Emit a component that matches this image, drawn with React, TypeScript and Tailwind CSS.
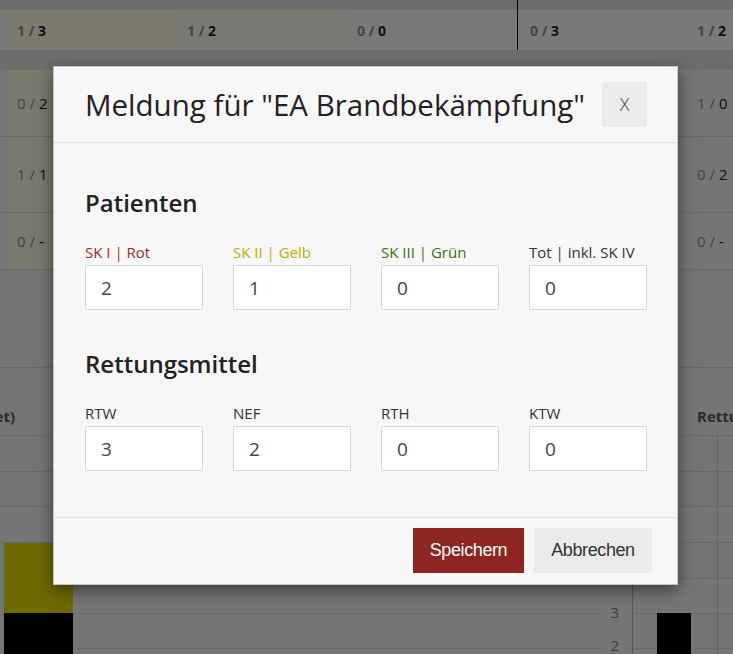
import React from "react";

function Frac({ a, b }: { a: string; b: string }) {
  return (
    <span>
      <span className="text-[#8a8a8a]">{a} / </span>
      <span className="text-[#1c1c2c]">{b}</span>
    </span>
  );
}

function Background() {
  const rows = [
    { h: "h-[67px]", l: ["0", "2"], r: ["1", "0"] },
    { h: "h-[76px]", l: ["1", "1"], r: ["0", "2"] },
    { h: "h-[57px]", l: ["0", "-"], r: ["0", "-"] },
  ];
  return (
    <div className="flex flex-col">
      <div className="h-[10px] shrink-0 bg-[#dadada] pl-[517px]">
        <div className="h-full border-l border-black" />
      </div>
      <div className="flex h-[41px] shrink-0 border-b border-[#d6d6d6] bg-[#f2f2f2] text-[14px] font-bold">
        <div className="w-[7px] shrink-0" />
        <div className="flex w-[170px] shrink-0 items-center bg-[#f6f5d8] pl-[10px]">
          <Frac a="1" b="3" />
        </div>
        <div className="flex w-[170px] shrink-0 items-center bg-[#eef3e6] pl-[10px]">
          <Frac a="1" b="2" />
        </div>
        <div className="flex w-[170px] shrink-0 items-center pl-[10px]">
          <Frac a="0" b="0" />
        </div>
        <div className="flex w-[170px] shrink-0 items-center border-l border-black pl-[12px]">
          <Frac a="0" b="3" />
        </div>
        <div className="flex w-[170px] shrink-0 items-center pl-[10px]">
          <Frac a="1" b="2" />
        </div>
      </div>
      <div className="h-[19px] shrink-0 bg-[#dadada]" />
      {rows.map((r, i) => (
        <div key={i} className={`flex ${r.h} shrink-0 border-b border-[#d2d2d2] text-[15px]`}>
          <div className="w-[7px] shrink-0" />
          <div className="flex w-[170px] shrink-0 items-center bg-[#f2f2dc] pl-[10px]">
            <Frac a={r.l[0]} b={r.l[1]} />
          </div>
          <div className="flex-1" />
          <div className="flex w-[46px] shrink-0 items-center pl-[10px]">
            <Frac a={r.r[0]} b={r.r[1]} />
          </div>
        </div>
      ))}
      <div className="h-[98px] shrink-0 border-b border-[#d2d2d2]" />
      <div className="flex h-[68px] shrink-0 items-start border-b border-[#d2d2d2] pt-[38px] text-[15px] font-bold leading-[20px] text-[#555]">
        <div className="flex w-[15px] shrink-0 justify-end overflow-hidden whitespace-nowrap">(gemeldet)</div>
        <div className="flex-1" />
        <div className="w-[36px] shrink-0 overflow-hidden whitespace-nowrap">Rettungsmittel</div>
      </div>
      {["h-[36px]", "h-[35px]", "h-[36px]"].map((h, i) => (
        <div key={i} className={`flex ${h} shrink-0 border-b border-[#d2d2d2]`}>
          <div className="flex-1" />
          <div className="w-[16px] border-l border-[#c8c8c8]" />
        </div>
      ))}
      <svg width="733" height="111" viewBox="0 0 733 111" className="block shrink-0">
        <line x1="73" y1="35.5" x2="600" y2="35.5" stroke="#d2d2d2" />
        <line x1="73" y1="70.5" x2="600" y2="70.5" stroke="#d2d2d2" />
        <line x1="73" y1="105.5" x2="600" y2="105.5" stroke="#d2d2d2" />
        <line x1="632" y1="35.5" x2="733" y2="35.5" stroke="#d2d2d2" />
        <line x1="632" y1="70.5" x2="733" y2="70.5" stroke="#d2d2d2" />
        <line x1="632" y1="105.5" x2="733" y2="105.5" stroke="#d2d2d2" />
        <line x1="632.5" y1="0" x2="632.5" y2="111" stroke="#b0b0b0" />
        <line x1="717.5" y1="0" x2="717.5" y2="111" stroke="#c8c8c8" />
        <rect x="4" y="0" width="69" height="70" fill="#dcd400" />
        <rect x="4" y="70" width="69" height="41" fill="#000" />
        <rect x="657" y="70" width="34" height="41" fill="#000" />
        <text x="619" y="75" textAnchor="end" fontSize="15" fill="#777" fontFamily="Open Sans, sans-serif">3</text>
        <text x="619" y="108" textAnchor="end" fontSize="15" fill="#777" fontFamily="Open Sans, sans-serif">2</text>
      </svg>
    </div>
  );
}

function Field({ label, value, color }: { label: string; value: string; color: string }) {
  return (
    <div className="flex flex-col">
      <label className={`mb-[3px] block text-[15px] leading-[20px] ${color}`}>{label}</label>
      <input
        readOnly
        value={value}
        className="h-[45px] w-full border border-[#d9d9d9] bg-white pl-[15px] text-[19px] text-[#444] outline-none"
      />
    </div>
  );
}

export default function App() {
  return (
    <div className="relative h-[654px] w-[733px] overflow-hidden bg-[#ebebeb] font-['Open_Sans',sans-serif]">
      <Background />
      <div className="absolute inset-0 bg-black/50">
        <div className="ml-[53px] mt-[66px] w-[625px] border border-[#c4c4c4] bg-[#f7f7f7] shadow-[0_5px_15px_rgba(0,0,0,0.5)]">
          <div className="flex h-[76px] items-center justify-between border-b border-[#e3e3e3] pl-[31px] pr-[30px]">
            <h1 className="text-[29.5px] leading-[38px] text-[#222]">Meldung für "EA Brandbekämpfung"</h1>
            <button className="flex h-[45px] w-[45px] items-center justify-center bg-[#ebebeb] text-[18px] font-light text-[#444]">
              X
            </button>
          </div>
          <div className="pb-[46px] pl-[31px] pr-[30px] pt-[45px]">
            <h2 className="mb-[25px] text-[24px] font-semibold leading-[29px] text-[#222]">Patienten</h2>
            <div className="grid grid-cols-[118px_118px_118px_118px] gap-x-[30px]">
              <Field label="SK I | Rot" value="2" color="text-[#9a2c2c]" />
              <Field label="SK II | Gelb" value="1" color="text-[#bfae00]" />
              <Field label="SK III | Grün" value="0" color="text-[#3f6b1a]" />
              <Field label="Tot | inkl. SK IV" value="0" color="text-[#333]" />
            </div>
            <h2 className="mb-[25px] mt-[39px] text-[24px] font-semibold leading-[29px] text-[#222]">Rettungsmittel</h2>
            <div className="grid grid-cols-[118px_118px_118px_118px] gap-x-[30px]">
              <Field label="RTW" value="3" color="text-[#333]" />
              <Field label="NEF" value="2" color="text-[#333]" />
              <Field label="RTH" value="0" color="text-[#333]" />
              <Field label="KTW" value="0" color="text-[#333]" />
            </div>
          </div>
          <div className="flex justify-end gap-[10px] border-t border-[#e3e3e3] pb-[11px] pr-[25px] pt-[10px] font-['Liberation_Sans',sans-serif]">
            <button className="h-[45px] w-[111px] bg-[#8d2520] text-[18px] tracking-[-0.4px] text-white">Speichern</button>
            <button className="h-[45px] w-[118px] bg-[#ebebeb] text-[18px] tracking-[-0.4px] text-[#333]">Abbrechen</button>
          </div>
        </div>
      </div>
    </div>
  );
}
